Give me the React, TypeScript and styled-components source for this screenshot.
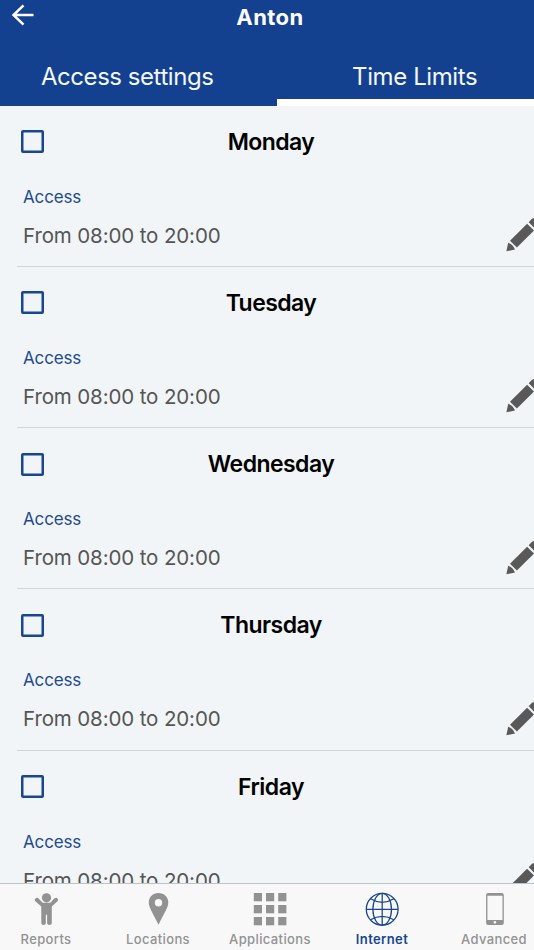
import React from "react";
import styled, { createGlobalStyle } from "styled-components";

const GlobalStyle = createGlobalStyle`
  * { box-sizing: border-box; }
  body { margin: 0; background: #f1f5f7; font-family: Inter, "Liberation Sans", sans-serif; }
  h1, h2, p { margin: 0; }
`;

const Screen = styled.main`
  display: flex;
  flex-direction: column;
  width: 534px;
  height: 950px;
  overflow: hidden;
  background: #f1f5f7;
`;

const Header = styled.header`
  flex: none;
  height: 105.6px;
  background: #13418f;
  color: #fff;
`;

const TitleBar = styled.div`
  display: grid;
  grid-template-columns: 80px 380px 74px;
  height: 47px;
`;

const BackButton = styled.button`
  display: flex;
  padding: 3px 0 0 11px;
  border: 0;
  background: none;
  color: inherit;
`;

const Title = styled.h1`
  font-size: 22px;
  line-height: 34px;
  font-weight: 700;
  letter-spacing: 0.45px;
  text-align: center;
`;

const Tabs = styled.nav`
  display: grid;
  grid-template-columns: 277.4px 1fr;
  height: 58.6px;
`;

const Tab = styled.button<{ $active?: boolean }>`
  padding: ${(p) => (p.$active ? "8px 0 0 18px" : "8px 23px 7px 0")};
  border: 0;
  border-bottom: ${(p) => (p.$active ? "7px solid #fff" : "0")};
  background: none;
  color: #f4f7fc;
  font: 400 24px/43px Inter, sans-serif;
  letter-spacing: ${(p) => (p.$active ? "-0.4px" : "-0.45px")};
  white-space: nowrap;
`;

const DayList = styled.section`
  flex: 1;
  min-height: 0;
  overflow: hidden;
`;

const Day = styled.article`
  height: 161.3px;
  margin-left: 17px;
  border-bottom: 1px solid #d0d6da;
`;

const DayHead = styled.div`
  display: grid;
  grid-template-columns: 64px 380px;
  align-items: center;
  height: 72px;
`;

const Checkbox = styled.span`
  width: 23px;
  height: 23px;
  margin-left: 3.5px;
  border: 2px solid #194690;
  border-radius: 2px;
  box-shadow: inset 0 0 0 0.5px #194690;
`;

const DayName = styled.h2`
  color: #000;
  font-size: 23px;
  line-height: 30px;
  font-weight: 600;
  letter-spacing: -0.55px;
  text-align: center;
`;

const AccessLabel = styled.p`
  padding-left: 6px;
  color: #1e4a90;
  font-size: 17px;
  line-height: 38px;
  letter-spacing: -0.15px;
`;

const Schedule = styled.div`
  display: flex;
  justify-content: space-between;
  align-items: center;
  height: 39px;
  padding-left: 6px;
`;

const Hours = styled.p`
  color: #555;
  font-size: 20.5px;
  line-height: 39px;
  letter-spacing: -0.12px;
`;

const EditButton = styled.button`
  display: flex;
  flex: none;
  margin-right: -8px;
  padding: 0;
  border: 0;
  background: none;
`;

const BottomBar = styled.nav`
  display: grid;
  flex: none;
  grid-template-columns: repeat(5, 112px);
  height: 67px;
  padding-top: 8px;
  border-top: 1px solid #bcc4c5;
  background: #f8f8f8;
`;

const BottomItem = styled.button<{ $active?: boolean }>`
  display: flex;
  flex-direction: column;
  align-items: center;
  gap: 3px;
  margin-left: -20px;
  padding: 0;
  border: 0;
  background: none;
  color: ${(p) => (p.$active ? "#17468f" : "#929292")};
  font: ${(p) => (p.$active ? 600 : 500)} 13px/20px Inter, sans-serif;
  letter-spacing: 0.38px;
`;

const BackIcon = () => (
  <svg width="24" height="24" viewBox="0 0 24 24" fill="none" stroke="currentColor" strokeWidth="2.5">
    <path d="M22.5 12H2.5M12.5 2.3L2.5 12l10 9.7" />
  </svg>
);

const PencilIcon = () => (
  <svg width="36" height="36" viewBox="0 0 36 36" fill="#595959">
    <path d="M0.4 34.3L2.2 25.7Q6.6 27 9 32.5Z" />
    <path d="M4 23.8L21.1 6.7L28 13.5L10.9 30.6Z" />
    <path d="M22.7 5.2L26 1.8Q27.5.5 29 2L32.6 5.5Q34 7 32.6 8.5L29.3 11.8Z" />
  </svg>
);

const PersonIcon = () => (
  <svg width="34" height="34" viewBox="0 0 34 34" fill="currentColor">
    <circle cx="17.5" cy="5.8" r="4.6" />
    <path d="M7 5.9Q5.1 7.1 6.1 8.9L12.3 14.6V31.3Q12.5 33.1 14.5 33.1Q16.6 33.1 16.8 31.3V22.8H18.1V31.3Q18.3 33.1 20.4 33.1Q22.6 33.1 22.8 31.3V14.6L28.7 8.9Q29.8 7.1 28 5.9Q26.7 5.2 25.6 6.3L21.3 10.8H13.6L9.3 6.3Q8.3 5.2 7 5.9Z" />
  </svg>
);

const PinIcon = () => (
  <svg width="34" height="34" viewBox="0 0 34 34" fill="currentColor">
    <path fillRule="evenodd" d="M17.5 1C11.8 1 7.8 5.1 7.8 10.3C7.8 16 12 21.3 17.5 32.7C23 21.3 27.3 16 27.3 10.3C27.3 5.1 23.2 1 17.5 1ZM17.5 7A3.7 3.7 0 1 1 17.5 14.4A3.7 3.7 0 1 1 17.5 7Z" />
  </svg>
);

const GridIcon = () => (
  <svg width="34" height="34" viewBox="0 0 34 34" fill="currentColor">
    {[1, 13, 25].flatMap((y) =>
      [0.8, 13, 25.2].map((x) => <rect key={`${x}-${y}`} x={x} y={y} width="8.2" height="8.3" />),
    )}
  </svg>
);

const GlobeIcon = () => (
  <svg width="34" height="34" viewBox="0 0 34 34" fill="none" stroke="currentColor" strokeWidth="1.25">
    <circle cx="17.2" cy="17.3" r="15.9" />
    <ellipse cx="17.2" cy="17.3" rx="9.3" ry="15.9" />
    <path d="M17.2 1.4V33.2M1.3 17.3H33.1M5.5 6.8Q17.2 13.8 28.9 6.8M5.5 27.8Q17.2 20.8 28.9 27.8" />
  </svg>
);

const PhoneIcon = () => (
  <svg width="34" height="34" viewBox="0 0 34 34" fill="currentColor">
    <path fillRule="evenodd" d="M11.1 1H24.8Q26.8 1 26.8 3V31Q26.8 33 24.8 33H11.1Q9.1 33 9.1 31V3Q9.1 1 11.1 1ZM10.4 3.7V28H25.5V3.7ZM17.9 28.9A1.4 1.4 0 1 0 17.9 31.7A1.4 1.4 0 1 0 17.9 28.9Z" />
  </svg>
);

const days = ["Monday", "Tuesday", "Wednesday", "Thursday", "Friday"];

const destinations = [
  { label: "Reports", Icon: PersonIcon },
  { label: "Locations", Icon: PinIcon },
  { label: "Applications", Icon: GridIcon },
  { label: "Internet", Icon: GlobeIcon, active: true },
  { label: "Advanced", Icon: PhoneIcon },
];

export default function App() {
  return (
    <Screen>
      <GlobalStyle />
      <Header>
        <TitleBar>
          <BackButton aria-label="Back"><BackIcon /></BackButton>
          <Title>Anton</Title>
        </TitleBar>
        <Tabs>
          <Tab>Access settings</Tab>
          <Tab $active>Time Limits</Tab>
        </Tabs>
      </Header>
      <DayList>
        {days.map((day) => (
          <Day key={day}>
            <DayHead>
              <Checkbox role="checkbox" aria-checked={false} aria-label={day} />
              <DayName>{day}</DayName>
            </DayHead>
            <AccessLabel>Access</AccessLabel>
            <Schedule>
              <Hours>From 08:00 to 20:00</Hours>
              <EditButton aria-label={`Edit ${day}`}><PencilIcon /></EditButton>
            </Schedule>
          </Day>
        ))}
      </DayList>
      <BottomBar>
        {destinations.map(({ label, Icon, active }) => (
          <BottomItem key={label} $active={active}>
            <Icon />
            {label}
          </BottomItem>
        ))}
      </BottomBar>
    </Screen>
  );
}
